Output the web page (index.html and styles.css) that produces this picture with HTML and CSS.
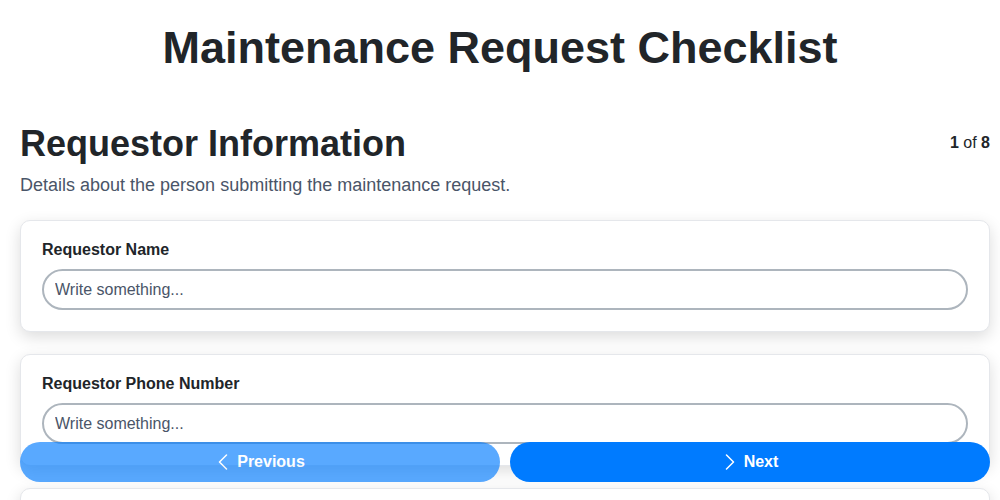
FILE: index.html
```html
<!DOCTYPE html>
<html lang="en">
<head>
<meta charset="utf-8">
<title>Maintenance Request Checklist</title>
<link rel="stylesheet" href="styles.css">
</head>
<body>
<h1 class="title">Maintenance Request Checklist</h1>
<main class="content">
  <div class="section-head">
    <h2 class="section-title">Requestor Information</h2>
    <div class="counter"><b>1</b> of <b>8</b></div>
  </div>
  <p class="section-desc">Details about the person submitting the maintenance request.</p>

  <div class="card">
    <label class="field-label">Requestor Name</label>
    <input class="field-input" type="text" placeholder="Write something...">
  </div>
  <div class="card">
    <label class="field-label">Requestor Phone Number</label>
    <input class="field-input" type="text" placeholder="Write something...">
  </div>
  <div class="card">
    <label class="field-label">Requestor Email</label>
    <input class="field-input" type="text" placeholder="Write something...">
  </div>
</main>
<nav class="pager">
  <button class="btn btn-prev" type="button">
    <svg class="chev" viewBox="0 0 16 16" width="16" height="16"><path d="M11.5 1 4.5 8l7 7" fill="none" stroke="currentColor" stroke-width="1.5" stroke-linecap="round" stroke-linejoin="round"/></svg>
    <span>Previous</span>
  </button>
  <button class="btn btn-next" type="button">
    <svg class="chev" viewBox="0 0 16 16" width="16" height="16"><path d="M4.5 1l7 7-7 7" fill="none" stroke="currentColor" stroke-width="1.5" stroke-linecap="round" stroke-linejoin="round"/></svg>
    <span>Next</span>
  </button>
</nav>
</body>
</html>
```

FILE: styles.css
```css
* { box-sizing: border-box; }

html, body {
  margin: 0;
  padding: 0;
  background: #ffffff;
  font-family: "Liberation Sans", Arial, sans-serif;
  color: #212529;
}

.title {
  margin: 22px 0 0;
  font-size: 45px;
  line-height: 52px;
  font-weight: 700;
  text-align: center;
  color: #212529;
}

.content {
  padding: 48px 10px 0 20px;
}

.section-head {
  display: flex;
  justify-content: space-between;
  align-items: center;
}

.section-title {
  margin: 0;
  font-size: 36px;
  line-height: 1.2;
  font-weight: 700;
  color: #212529;
}

.counter {
  font-size: 16px;
  line-height: 1.15;
  color: #212529;
}

.section-desc {
  margin: 7px 0 21px;
  font-size: 18px;
  line-height: 1.5;
  color: #4a5568;
}

.card {
  border: 1px solid #e5e7eb;
  border-radius: 10px;
  background: #fff;
  padding: 19px 21px 21px;
  margin-bottom: 22px;
  box-shadow: 0 5px 16px rgba(0, 0, 0, 0.14);
}

.field-label {
  display: block;
  font-size: 16px;
  line-height: 19px;
  font-weight: 700;
  color: #212529;
  margin-bottom: 10px;
}

.field-input {
  display: block;
  width: 100%;
  height: 41px;
  border: 2px solid #adb5bd;
  border-radius: 21px;
  padding: 0 11px;
  font-family: "Liberation Sans", Arial, sans-serif;
  font-size: 16px;
  color: #212529;
  background: #fff;
  outline: none;
}

.field-input::placeholder {
  color: #4a5568;
  opacity: 1;
}

.pager {
  position: fixed;
  left: 20px;
  right: 10px;
  bottom: 18px;
  display: flex;
  gap: 10px;
}

.btn {
  flex: 1;
  height: 40px;
  border: none;
  border-radius: 20px;
  background: #007bff;
  color: #fff;
  font-family: "Liberation Sans", Arial, sans-serif;
  font-size: 16px;
  font-weight: 700;
  display: flex;
  align-items: center;
  justify-content: center;
  gap: 6px;
  padding: 0;
}

.btn-prev {
  opacity: 0.65;
}

.chev {
  display: block;
}
```
